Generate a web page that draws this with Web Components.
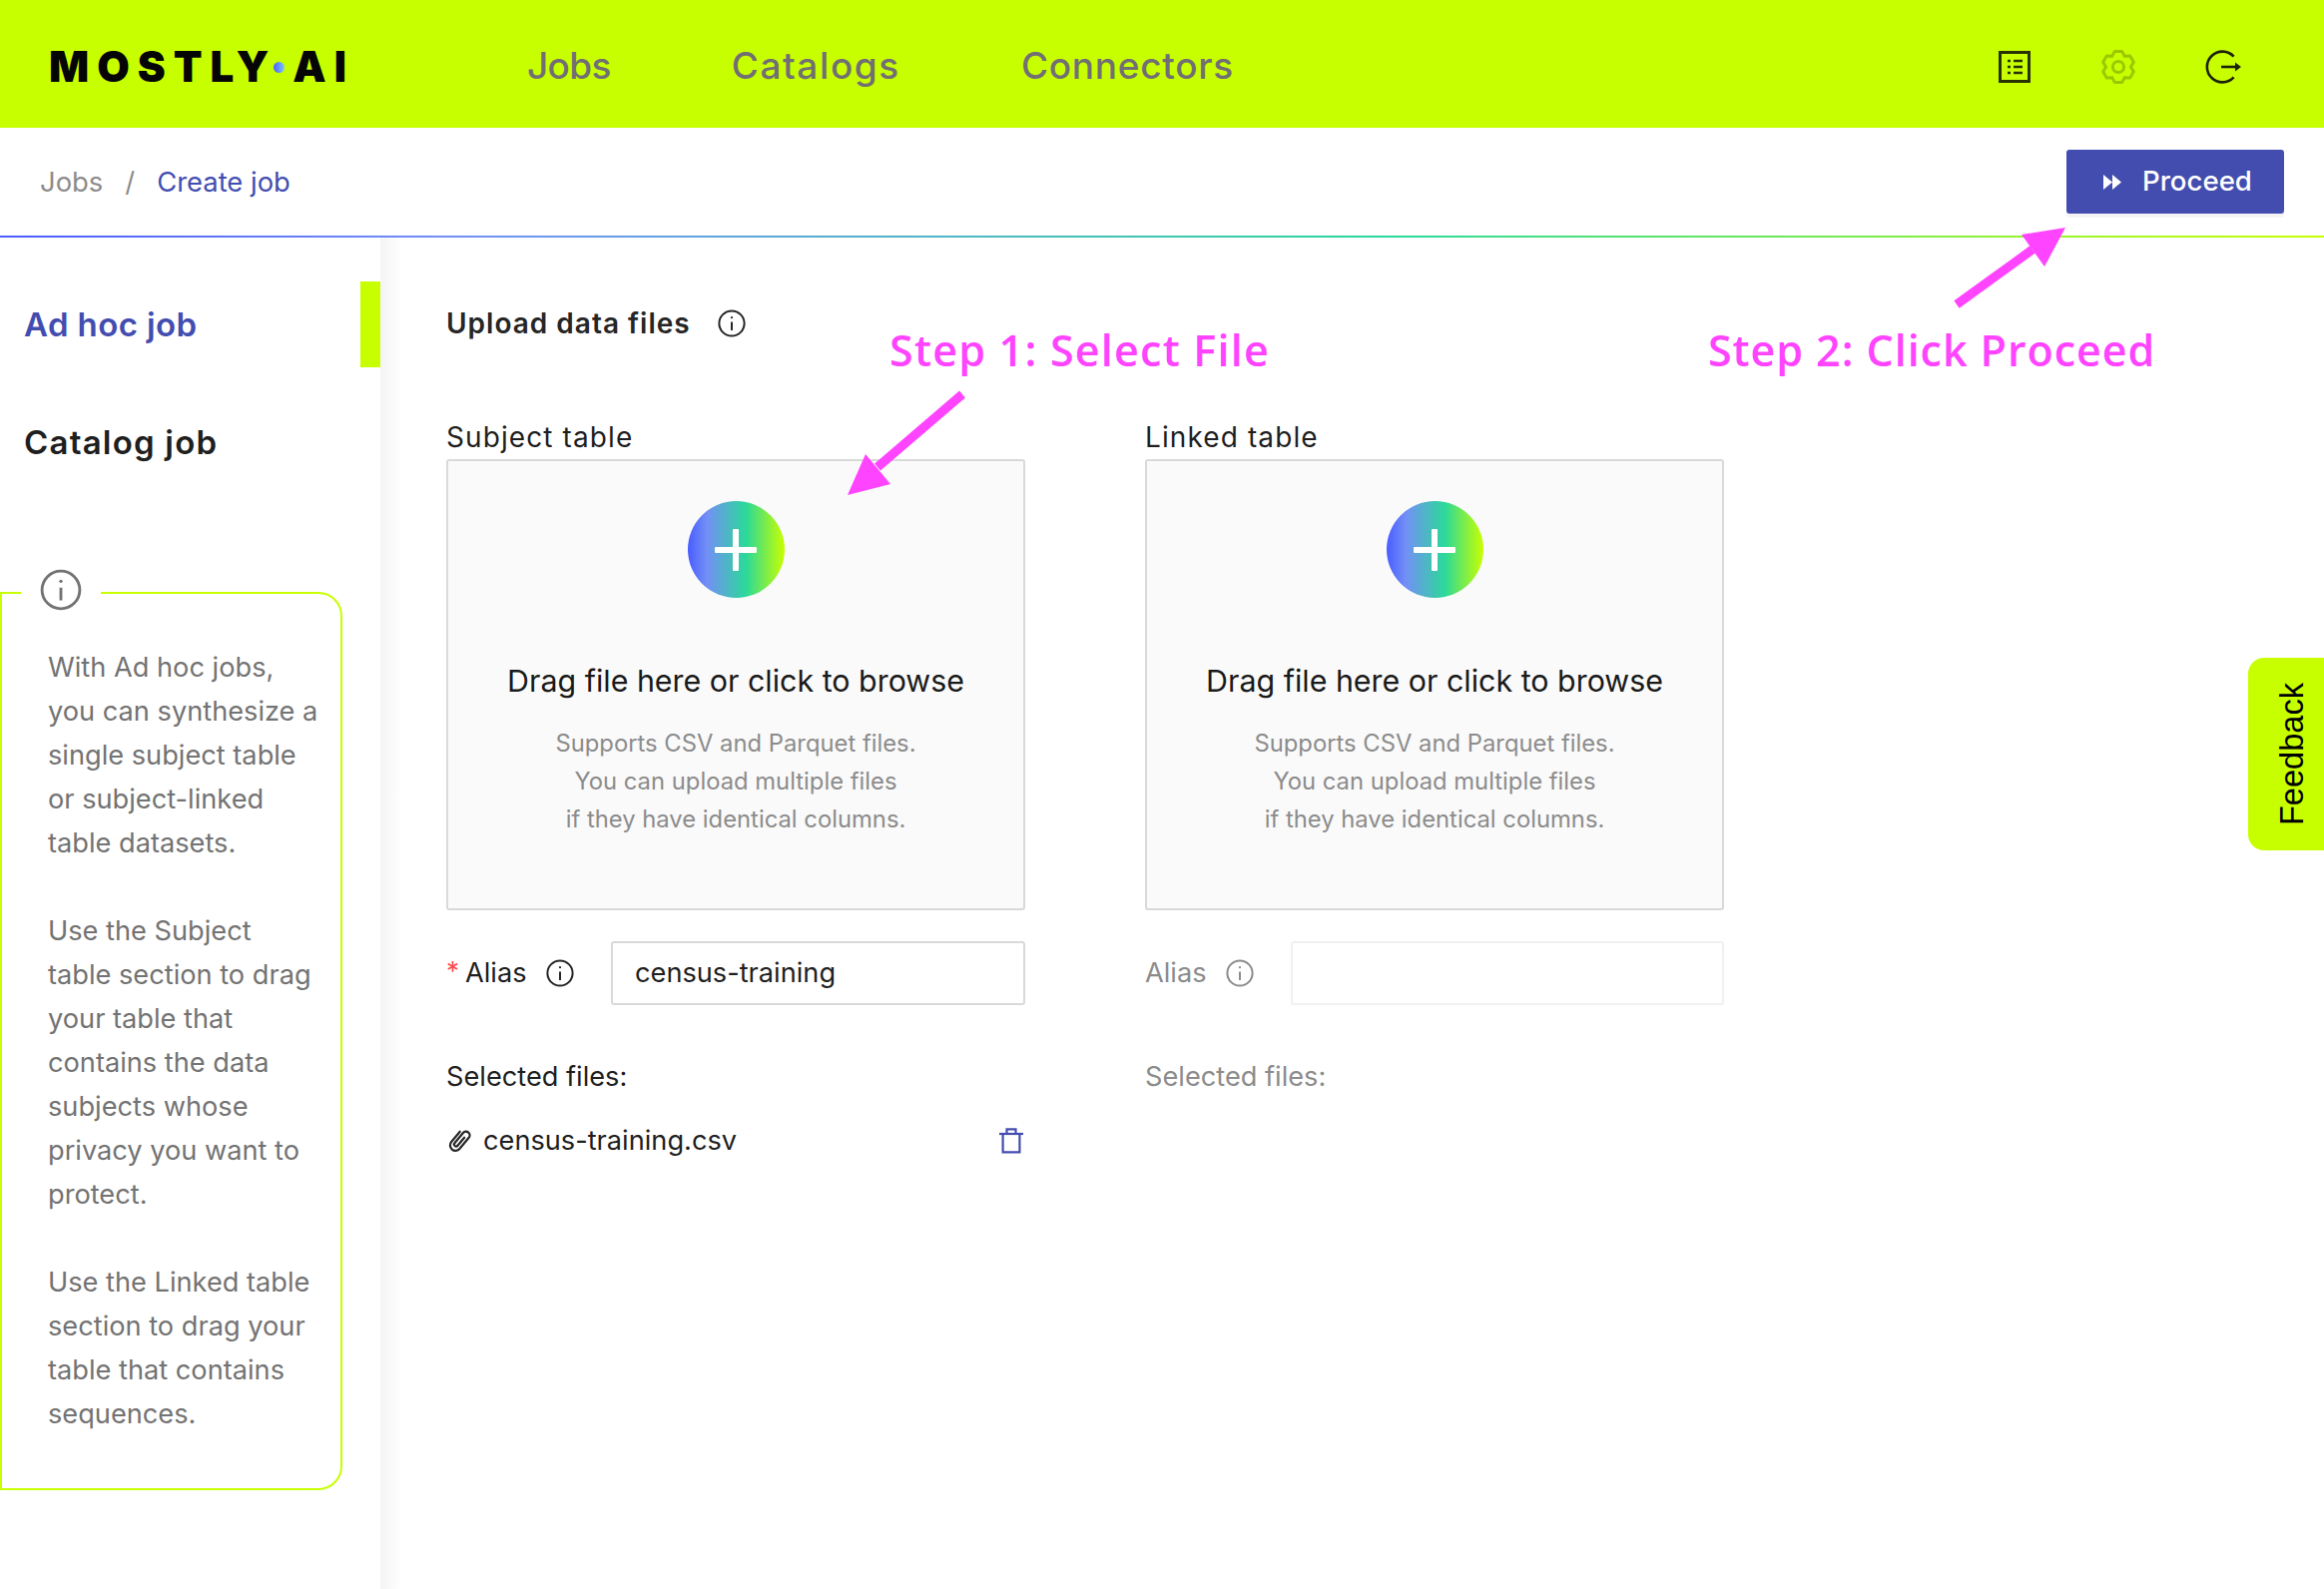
<!DOCTYPE html>
<html lang="en">
<head>
<meta charset="utf-8">
<title>Create job</title>
<style>
	html, body { margin: 0; height: 100%; }
	body { position: relative; width: 2328px; height: 1592px; overflow: hidden; background: #fff; font-family: Inter, "Liberation Sans", sans-serif; }
</style>
</head>
<body>
<top-bar></top-bar>
<crumb-bar></crumb-bar>
<job-page>
	<side-nav slot="side">
		<info-box>
			<p>With Ad hoc jobs,<br>you can synthesize a<br>single subject table<br>or subject-linked<br>table datasets.</p>
			<p>Use the Subject<br>table section to drag<br>your table that<br>contains the data<br>subjects whose<br>privacy you want to<br>protect.</p>
			<p>Use the Linked table<br>section to drag your<br>table that contains<br>sequences.</p>
		</info-box>
	</side-nav>
	<upload-col label="Subject table" required alias="census-training" file="census-training.csv"></upload-col>
	<upload-col label="Linked table" disabled></upload-col>
</job-page>
<feedback-tab>Feedback</feedback-tab>
<step-notes></step-notes>

<script>
const LIME = '#c8ff00';
const INDIGO = '#434db0';
const BRAND = 'linear-gradient(90deg, #4a5cff 0%, #7390f5 20%, #2bd99a 60%, #c8ff00 100%)';

const infoIcon = (size, color, sw = 2) => `
	<svg width="${size}" height="${size}" viewBox="0 0 28 28" fill="none" stroke="${color}" stroke-width="${sw}">
		<circle cx="14" cy="14" r="12.6"/>
		<path d="M14 12.5V21"/>
		<circle cx="14" cy="8.2" r="1.1" fill="${color}" stroke="none"/>
	</svg>`;

// six tooth gear, same shape as the one in the header
function gearPath(cx, cy, outer, inner) {
	const pts = [];
	for (let i = 0; i < 6; i++) {
		const a = -90 + i * 60;
		[[-31, inner], [-13, outer], [13, outer], [31, inner]].forEach(([d, r]) => {
			const t = (a + d) * Math.PI / 180;
			pts.push((cx + r * Math.cos(t)).toFixed(2) + ' ' + (cy + r * Math.sin(t)).toFixed(2));
		});
	}
	return 'M' + pts.join('L') + 'Z';
}

class TopBar extends HTMLElement {
	connectedCallback() {
		this.attachShadow({ mode: 'open' });
		this.shadowRoot.innerHTML = `
			<style>
				:host { display: flex; align-items: center; box-sizing: border-box; height: 128px; padding: 6px 83px 0 49px; background: ${LIME}; }
				.logo { display: flex; align-items: center; width: 302px; margin-right: 177px; font: 900 42px/1 Inter, sans-serif; color: #050505; letter-spacing: 8px; white-space: nowrap; }
				.dot { width: 11px; height: 11px; margin: 0 8px 0 -3px; border-radius: 50%; background: linear-gradient(90deg, #4a5cff, #7ec8f0); flex: none; }
				nav { display: flex; gap: 121px; margin-top: -3px; font: 500 37px/1 Inter, sans-serif; color: #716f73; flex: 1; }
				.icons { display: flex; align-items: center; gap: 70px; }
				svg { display: block; }
			</style>
			<div class="logo"><span>MOSTLY</span><i class="dot"></i><span>AI</span></div>
			<nav><span style="letter-spacing: -0.7px">Jobs</span><span style="letter-spacing: 1.6px">Catalogs</span><span style="letter-spacing: 0.7px">Connectors</span></nav>
			<div class="icons">
				<svg width="34" height="34" viewBox="0 0 34 34" fill="none" stroke="#283200" stroke-width="3">
					<rect x="2.5" y="2.5" width="29" height="29"/>
					<path d="M16 11H25M16 17H25M16 23H25" stroke-width="2.4"/>
					<path d="M10 11h3M10 17h3M10 23h3" stroke-width="2.4"/>
				</svg>
				<svg width="34" height="36" viewBox="0 0 34 36" fill="none" stroke="#9bc800" stroke-width="3" stroke-linejoin="round">
					<path d="${gearPath(17, 18, 16, 12.4)}"/>
					<circle cx="17" cy="18" r="5.6"/>
				</svg>
				<svg width="36" height="36" viewBox="0 0 36 36" fill="none" stroke="#1c2208" stroke-width="2.6">
					<path d="M28.6 7.6A15.4 15.4 0 1 0 28.6 28.4"/>
					<path d="M16 18H31"/>
					<path d="M30 13.6L36 18L30 22.4Z" fill="#1c2208" stroke="none"/>
				</svg>
			</div>
		`;
	}
}

class CrumbBar extends HTMLElement {
	connectedCallback() {
		this.attachShadow({ mode: 'open' });
		this.shadowRoot.innerHTML = `
			<style>
				:host { display: flex; align-items: center; height: 108px; padding: 0 40px; font: 400 27.4px/40px Inter, sans-serif; color: #8c8c8c; border-bottom: 2px solid transparent; border-image: ${BRAND} 1; }
				.sep { margin: 0 22px; }
				.here { color: ${INDIGO}; flex: 1; }
				button { display: flex; align-items: center; width: 218px; height: 64px; padding: 0 0 0 37px; box-sizing: border-box; border: 0; border-radius: 3px; background: ${INDIGO}; color: #fff; font: 500 27.6px/1 Inter, sans-serif; box-shadow: 0 4px 0 rgba(0,0,0,0.04); }
				svg { margin-right: 21px; }
			</style>
			<span>Jobs</span><span class="sep">/</span><span class="here">Create job</span>
			<button>
				<svg width="18" height="15" viewBox="0 0 18 15" fill="#fff"><path d="M0 0L9 7.5L0 15ZM9 0L18 7.5L9 15Z"/></svg>
				Proceed
			</button>
		`;
	}
}

class JobPage extends HTMLElement {
	connectedCallback() {
		this.attachShadow({ mode: 'open' });
		this.shadowRoot.innerHTML = `
			<style>
				:host { display: flex; height: 1354px; }
				main { flex: 1; padding: 66px 0 0 66px; background: linear-gradient(90deg, #f4f4f5, #fff 22px); }
				h2 { display: flex; align-items: center; gap: 27px; margin: 0 0 74px; font: 600 28px/40px Inter, sans-serif; letter-spacing: 1px; color: #262626; }
				.cols { display: grid; grid-template-columns: 580px 580px; gap: 120px; }
			</style>
			<slot name="side"></slot>
			<main>
				<h2>Upload data files ${infoIcon(28, '#262626')}</h2>
				<div class="cols"><slot></slot></div>
			</main>
		`;
	}
}

class SideNav extends HTMLElement {
	connectedCallback() {
		this.attachShadow({ mode: 'open' });
		this.shadowRoot.innerHTML = `
			<style>
				:host { display: block; width: 381px; flex: none; padding-top: 44px; box-sizing: border-box; }
				.item { display: flex; align-items: center; height: 86px; padding-left: 24px; margin-bottom: 32px; font: 600 33px/1 Inter, sans-serif; letter-spacing: 1.2px; color: #1f1f1f; }
				.active { color: ${INDIGO}; letter-spacing: 0.4px; border-right: 20px solid ${LIME}; }
				::slotted(info-box) { margin-top: 107px; }
			</style>
			<div class="item active">Ad hoc job</div>
			<div class="item">Catalog job</div>
			<slot></slot>
		`;
	}
}

class InfoBox extends HTMLElement {
	connectedCallback() {
		this.attachShadow({ mode: 'open' });
		this.shadowRoot.innerHTML = `
			<style>
				:host { display: block; position: relative; width: 343px; box-sizing: border-box; padding: 52px 10px 52px 46px; border: 2px solid ${LIME}; border-radius: 0 24px 24px 0; font: 400 27.2px/44px Inter, sans-serif; color: #737373; }
				.icon { position: absolute; left: 19px; top: -25px; padding: 0 19px; background: #fff; }
				svg { display: block; }
				::slotted(p) { margin: 0 0 44px; }
				::slotted(p:last-child) { margin: 0; }
			</style>
			<div class="icon">${infoIcon(42, '#737373', 1.9)}</div>
			<slot></slot>
		`;
	}
}

class UploadCol extends HTMLElement {
	connectedCallback() {
		const off = this.hasAttribute('disabled');
		const label = this.getAttribute('label');
		const alias = this.getAttribute('alias') || '';
		const file = this.getAttribute('file');
		this.attachShadow({ mode: 'open' });
		this.shadowRoot.innerHTML = `
			<style>
				:host { display: block; font: 400 27.2px/40px Inter, sans-serif; color: #1f1f1f; }
				.label { margin-bottom: 2px; font-size: 28px; letter-spacing: 1.1px; }
				.drop { display: flex; flex-direction: column; align-items: center; height: 452px; box-sizing: border-box; padding-top: 40px; background: #fafafa; border: 2px solid #d9d9d9; border-radius: 3px; }
				.plus { display: flex; align-items: center; justify-content: center; width: 97px; height: 97px; border-radius: 50%; background: ${BRAND}; }
				.drag { margin-top: 63px; font-size: 30.4px; color: #1a1a1a; }
				.sub { margin-top: 24px; font-size: 23.8px; line-height: 38px; color: #8c8c8c; text-align: center; }
				.alias { display: flex; align-items: center; height: 64px; margin-top: 31px; }
				.star { width: 19px; color: #ff4d4f; font-size: 26px; line-height: 30px; align-self: flex-start; margin-top: 15px; }
				.icon { display: flex; margin: 0 auto 0 19px; }
				.input { box-sizing: border-box; width: 415px; height: 64px; padding: 0 22px; line-height: 60px; border: 2px solid #d9d9d9; border-radius: 3px; background: #fff; }
				.selected { margin-top: 52px; }
				.file { display: flex; align-items: center; margin-top: 24px; }
				.file span { flex: 1; margin-left: 10px; }
				.file svg:first-child { margin-left: -1px; }
				.file svg:last-child { margin-right: 2px; }
				:host([disabled]) .alias, :host([disabled]) .selected { color: #8c8c8c; }
				:host([disabled]) .input { width: 434px; border-color: #f0f0f0; }
			</style>
			<div class="label">${label}</div>
			<div class="drop">
				<div class="plus">
					<svg width="42" height="42" viewBox="0 0 42 42" fill="#fff"><rect x="18" width="6" height="42" rx="1"/><rect y="18" width="42" height="6" rx="1"/></svg>
				</div>
				<div class="drag">Drag file here or click to browse</div>
				<div class="sub">Supports CSV and Parquet files.<br>You can upload multiple files<br>if they have identical columns.</div>
			</div>
			<div class="alias">
				${off ? '' : '<div class="star">*</div>'}
				<div>Alias</div>
				<div class="icon">${infoIcon(28, off ? '#8c8c8c' : '#262626')}</div>
				<div class="input">${alias}</div>
			</div>
			<div class="selected">Selected files:</div>
			${file ? `
			<div class="file">
				<svg width="28" height="28" viewBox="0 0 24 24" fill="none" stroke="#262626" stroke-width="1.9" stroke-linecap="round" stroke-linejoin="round">
					<path d="M7.4 5.5V17a4.6 4.6 0 0 0 9.2 0V4.6a3.2 3.2 0 0 0-6.4 0V16a1.7 1.7 0 0 0 3.4 0V7" transform="rotate(40 12 12)"/>
				</svg>
				<span>${file}</span>
				<svg width="24" height="26" viewBox="0 0 24 26" fill="none" stroke="${INDIGO}" stroke-width="2.2">
					<path d="M0 6H24"/>
					<path d="M7.5 6V1.4H16.5V6"/>
					<path d="M3.6 6V24.4H20.4V6"/>
				</svg>
			</div>` : ''}
		`;
	}
}

class FeedbackTab extends HTMLElement {
	connectedCallback() {
		this.attachShadow({ mode: 'open' });
		this.shadowRoot.innerHTML = `
			<style>
				:host { display: flex; align-items: center; justify-content: center; position: absolute; left: 2252px; top: 659px; box-sizing: border-box; width: 76px; height: 193px; padding-left: 12px; background: ${LIME}; border-radius: 16px 0 0 16px; }
				span { writing-mode: vertical-rl; transform: rotate(180deg); font: 400 32.6px/1 "Liberation Sans", sans-serif; color: #000; }
			</style>
			<span><slot></slot></span>
		`;
	}
}

// the pink notes drawn over the screenshot
class StepNotes extends HTMLElement {
	connectedCallback() {
		this.attachShadow({ mode: 'open' });
		this.shadowRoot.innerHTML = `
			<style>
				:host { position: absolute; left: 0; top: 0; width: 2328px; height: 1592px; pointer-events: none; }
				svg { position: absolute; left: 0; top: 0; }
				div { position: absolute; top: 322px; font: 600 43px/58px "Open Sans", sans-serif; letter-spacing: 0.95px; color: #ff44ff; white-space: nowrap; }
			</style>
			<svg width="2328" height="1592" fill="#ff44ff" stroke="none">
				<path d="M964 395L879 468" stroke="#ff44ff" stroke-width="9" fill="none"/>
				<path d="M849 496L867 455L892 485Z"/>
				<path d="M1960 305L2036 250" stroke="#ff44ff" stroke-width="9" fill="none"/>
				<path d="M2069 228L2025 235L2048 267Z"/>
			</svg>
			<div style="left: 891px; letter-spacing: 1.25px">Step 1: Select File</div>
			<div style="left: 1711px">Step 2: Click Proceed</div>
		`;
	}
}

customElements.define('top-bar', TopBar);
customElements.define('crumb-bar', CrumbBar);
customElements.define('job-page', JobPage);
customElements.define('side-nav', SideNav);
customElements.define('info-box', InfoBox);
customElements.define('upload-col', UploadCol);
customElements.define('feedback-tab', FeedbackTab);
customElements.define('step-notes', StepNotes);
</script>
</body>
</html>
